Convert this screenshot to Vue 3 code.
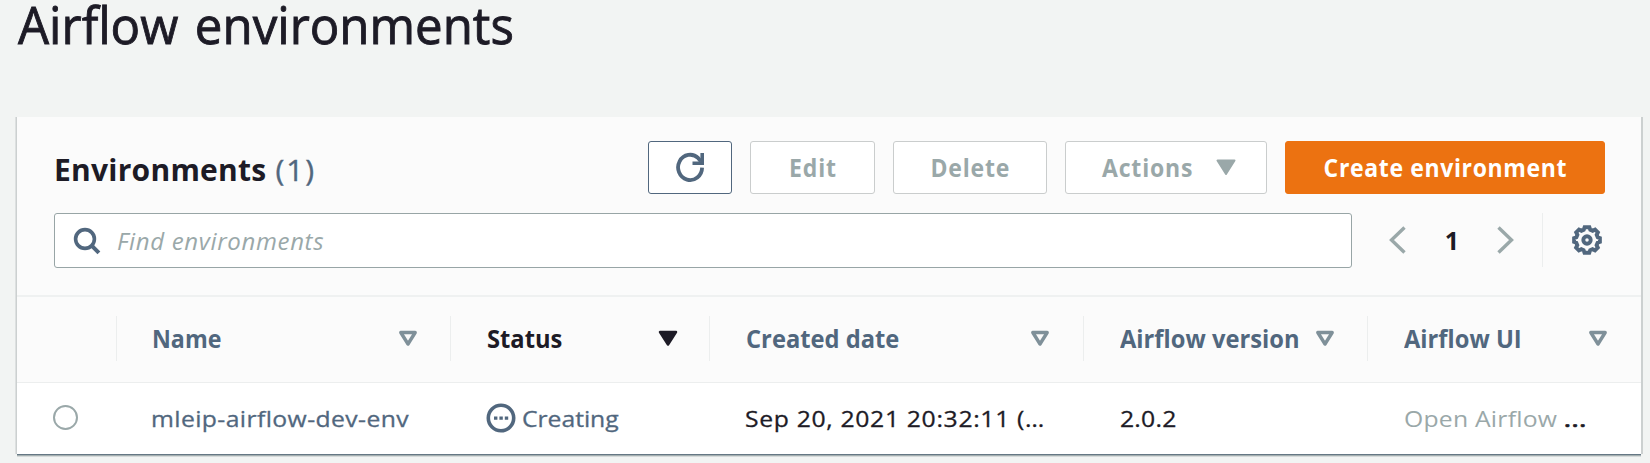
<script setup>
const columns = [
  { label: 'Name', cls: 'name' },
  { label: 'Status', cls: 'status', active: true },
  { label: 'Created date', cls: 'created' },
  { label: 'Airflow version', cls: 'version' },
  { label: 'Airflow UI', cls: 'ui' },
]
</script>

<template>
  <main class="page">
    <h1><span>Airflow environments</span></h1>
    <section class="panel">
      <header class="bar">
        <h2>Environments <span class="count">(1)</span></h2>
        <div class="buttons">
          <button class="btn refresh" aria-label="Refresh">
            <svg width="30" height="30" viewBox="0 0 30 30" fill="none" stroke="#51677e" stroke-width="3.8">
              <path d="M27.1 15.6A12 12.6 0 1 1 23.3 6.2L26 9.5" />
              <path d="M27.2 1v10.2H17.5" stroke-width="3.6" />
            </svg>
          </button>
          <button class="btn edit" disabled><span>Edit</span></button>
          <button class="btn delete" disabled><span>Delete</span></button>
          <button class="btn actions" disabled>
            <span>Actions</span>
            <svg width="20" height="17" viewBox="0 0 20 17"><path d="M1.5 1.5h17L10 15z" fill="#9aa8a9" stroke="#9aa8a9" stroke-width="2" stroke-linejoin="round" /></svg>
          </button>
          <button class="btn primary"><span>Create environment</span></button>
        </div>
      </header>

      <div class="tools">
        <div class="search">
          <svg width="28" height="28" viewBox="0 0 28 28" fill="none" stroke="#51677e">
            <circle cx="12" cy="12" r="9.4" stroke-width="3.6" />
            <path d="M18.7 18.7l7.2 7.2" stroke-width="4" />
          </svg>
          <span class="placeholder">Find environments</span>
        </div>
        <nav class="pager">
          <svg width="17" height="28" viewBox="0 0 17 28" fill="none" stroke="#9aa8a9" stroke-width="3.4"><path d="M15.5 1.5L2.5 14l13 12.5" /></svg>
          <b>1</b>
          <svg width="17" height="28" viewBox="0 0 17 28" fill="none" stroke="#9aa8a9" stroke-width="3.4"><path d="M1.5 1.5l13 12.5-13 12.5" /></svg>
        </nav>
        <div class="settings">
          <svg width="30" height="30" viewBox="0 0 30 30" fill="none" stroke="#51677e">
            <path d="M12.6 2.3h4.8l.9 2.5 2.4 1 2.4-1.2 2.8 2.8-1.2 2.5 1 2.3 2.2.9v3.8l-2.3.9-1 2.3 1.2 2.5-2.8 2.8-2.4-1.2-2.4 1-.9 2.5h-4.8l-.9-2.5-2.3-1-2.4 1.2-2.8-2.8 1.2-2.5-1-2.3-2.2-.9v-3.8l2.3-.9 1-2.3-1.2-2.5 2.8-2.8 2.4 1.2 2.3-1z" stroke-width="3.9" />
            <circle cx="15" cy="15" r="3.7" stroke-width="3.9" />
          </svg>
        </div>
      </div>

      <div class="row head">
        <div class="select"></div>
        <div v-for="c in columns" :key="c.label" class="th" :class="[c.cls, { active: c.active }]">
          <span>{{ c.label }}</span>
          <svg width="20" height="17" viewBox="0 0 20 17">
            <path v-if="c.active" d="M2 2h16L10 14.5z" fill="#1d1b26" stroke="#1d1b26" stroke-width="2.5" stroke-linejoin="round" />
            <path v-else d="M2.8 2.5h14.4L10 14z" fill="#fafafa" stroke="#7f9099" stroke-width="3.4" stroke-linejoin="round" />
          </svg>
        </div>
      </div>

      <div class="row body">
        <div class="select"><i class="radio"></i></div>
        <div class="td name"><span class="text link">mleip-airflow-dev-env</span></div>
        <div class="td status">
          <svg width="30" height="30" viewBox="0 0 30 30">
            <circle cx="15" cy="15" r="12.7" fill="none" stroke="#51677e" stroke-width="3.6" />
            <path d="M8 13.4h3.4v3.4H8zM13.4 13.4h3.4v3.4h-3.4zM18.8 13.4h3.4v3.4h-3.4z" fill="#51677e" />
          </svg>
          <span class="text creating">Creating</span>
        </div>
        <div class="td created"><span class="text date">Sep 20, 2021 20:32:11 (…</span></div>
        <div class="td version"><span class="text">2.0.2</span></div>
        <div class="td ui"><span class="text"><span class="muted">Open Airflow</span> <span class="dots">…</span></span></div>
      </div>
    </section>
  </main>
</template>

<style>
body { background: #f2f4f3; }
</style>

<style scoped>
* { box-sizing: border-box; }
.page {
  height: 463px;
  padding: 0 9px 0 17px;
  background: #f2f4f3;
  color: #1d1b26;
  font-family: "Open Sans", "Noto Sans", sans-serif;
}
h1 {
  margin: 0;
  height: 117px;
  padding-left: 1px;
  font-size: 52px;
  line-height: 47px;
  font-weight: 400;
  -webkit-text-stroke: .9px #1d1b26;
}
h1 span { display: inline-block; transform: scaleX(.946); transform-origin: left; word-spacing: 4px; white-space: nowrap; }
.panel {
  width: 1624px;
  height: 337px;
  background: #fff;
  box-shadow: -1px 0 #ccd0d0, 1px 0 #ccd0d0, -2px 0 #dde0e0, 2px 0 #ccd0d0, 0 1px #657784, 0 2px #a4afb0, 0 3px #d6dada;
}
.bar {
  display: flex;
  justify-content: space-between;
  height: 96px;
  padding: 24px 36px 0 37px;
  background: #fbfbfb;
}
h2 { margin: 8px 0 0; font-size: 30px; line-height: 42px; font-weight: 700; letter-spacing: .25px; white-space: nowrap; }
.count { font-weight: 400; color: #51677e; letter-spacing: 1.8px; margin-left: 1px; -webkit-text-stroke: .4px #51677e; }
.buttons { display: flex; gap: 18px; }
.btn {
  display: flex;
  align-items: center;
  justify-content: center;
  height: 53px;
  padding: 0 0 1px;
  border: 1px solid #cacdcd;
  border-radius: 3px;
  background: #fff;
  color: #9aa8a9;
  font: 700 25px "Open Sans", "Noto Sans", sans-serif;
  letter-spacing: .9px;
  white-space: nowrap;
}
.btn span { display: inline-block; transform: scaleX(.92); }
.refresh { width: 84px; border-color: #51677e; }
.edit { width: 125px; }
.delete { width: 154px; }
.actions { width: 202px; gap: 18px; padding-left: 2px; }
.primary { width: 320px; border-color: #ec7211; background: #ec7211; color: #fff; letter-spacing: .7px; }
.tools { display: flex; height: 84px; padding: 0 37px; background: #fbfbfb; border-bottom: 2px solid #eff1f1; }
.search {
  display: flex;
  align-items: center;
  gap: 16px;
  width: 1298px;
  height: 55px;
  padding-left: 18px;
  border: 1px solid #98a5a6;
  border-radius: 3px;
  background: #fff;
}
.placeholder { color: #9aa8a9; font-size: 24px; font-style: italic; letter-spacing: .65px; }
.pager { display: flex; align-items: center; justify-content: space-between; width: 125px; height: 53px; margin-left: 37px; }
.pager b { font-size: 25px; padding-left: 1px; }
.settings { display: flex; align-items: center; justify-content: flex-end; width: 60px; height: 54px; margin-left: 28px; border-left: 1px solid #eceeee; }
.row { display: grid; grid-template-columns: 99px 334px 259px 374px 284px 274px; align-items: center; }
.head { height: 86px; padding-bottom: 2px; background: #fbfbfb; border-bottom: 1px solid #eceeee; }
.th {
  display: flex;
  align-items: center;
  justify-content: space-between;
  height: 45px;
  padding-left: 36px;
  padding-right: 32px;
  border-left: 1px solid #eceeee;
  color: #51677e;
  font-size: 25.5px;
  font-weight: 700;
  white-space: nowrap;
}
.th span { display: inline-block; width: 0; padding-bottom: 2px; transform: scaleX(.93); transform-origin: left; }
.th.name { padding-left: 35px; }
.th.status { padding-right: 31px; }
.th.created, .th.ui { padding-right: 33px; }
.th.active { color: #1d1b26; }
.th.name span { transform: scaleX(.91); }
.body { height: 71px; padding-bottom: 2px; }
.select { padding-left: 36px; }
.radio { display: block; width: 25px; height: 25px; border: 2px solid #9aa8a9; border-radius: 50%; }
.td { display: flex; align-items: center; padding-left: 36px; white-space: nowrap; }
.td.name { padding-left: 35px; }
.td.status { gap: 6px; padding-left: 36px; }
.td.version, .td.ui { padding-left: 37px; }
.text { display: inline-block; padding-top: 2px; font-size: 22.5px; transform: scaleX(1.1); transform-origin: left; letter-spacing: .2px; -webkit-text-stroke: .3px currentColor; }
.link { color: #51677e; letter-spacing: .35px; }
.creating { color: #51677e; letter-spacing: -.05px; }
.date { letter-spacing: .6px; }
.muted { color: #9aa8a9; -webkit-text-stroke: 0; }
.dots { display: inline-block; transform: scaleX(1.2); transform-origin: left; -webkit-text-stroke: .6px #1d1b26; }
</style>
